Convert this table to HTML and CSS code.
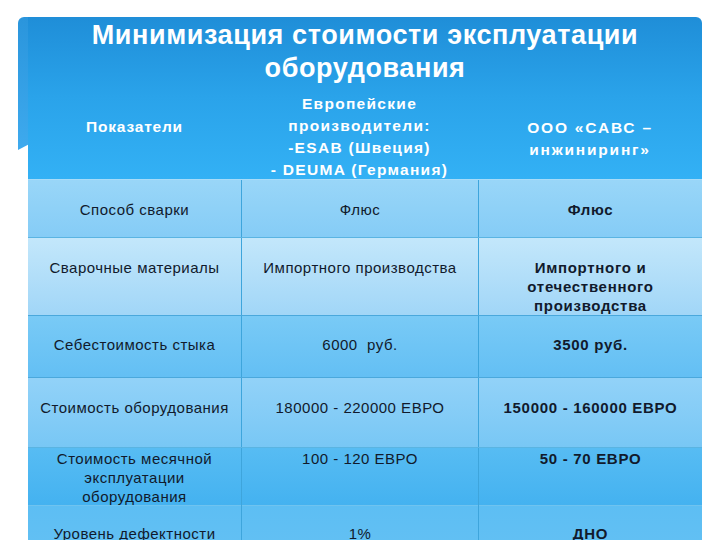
FILE: index.html
```html
<!DOCTYPE html>
<html lang="ru">
<head>
<meta charset="utf-8">
<title>Минимизация стоимости эксплуатации оборудования</title>
<link rel="stylesheet" href="styles.css">
</head>
<body>
<div class="slide">
  <div class="panel">
    <div class="fold"></div>
    <div class="main">
      <h1 class="title">Минимизация стоимости эксплуатации<br>оборудования</h1>
      <div class="row head">
        <div class="cell c1">Показатели</div>
        <div class="cell c2">Европейские<br>производители:<br>-ESAB (Швеция)<br>- DEUMA (Германия)</div>
        <div class="cell c3">ООО «САВС –<br>инжиниринг»</div>
      </div>
      <div class="row r1">
        <div class="cell">Способ сварки</div>
        <div class="cell">Флюс</div>
        <div class="cell strong">Флюс</div>
      </div>
      <div class="row r2">
        <div class="cell">Сварочные материалы</div>
        <div class="cell">Импортного производства</div>
        <div class="cell strong">Импортного и<br>отечественного<br>производства</div>
      </div>
      <div class="row r3">
        <div class="cell">Себестоимость стыка</div>
        <div class="cell">6000&nbsp; руб.</div>
        <div class="cell strong">3500 руб.</div>
      </div>
      <div class="row r4">
        <div class="cell">Стоимость оборудования</div>
        <div class="cell">180000 - 220000 ЕВРО</div>
        <div class="cell strong">150000 - 160000 ЕВРО</div>
      </div>
      <div class="row r5">
        <div class="cell">Стоимость месячной<br>эксплуатации<br>оборудования</div>
        <div class="cell">100 - 120 ЕВРО</div>
        <div class="cell strong">50 - 70 ЕВРО</div>
      </div>
      <div class="row r6">
        <div class="cell">Уровень дефектности</div>
        <div class="cell">1%</div>
        <div class="cell strong">ДНО</div>
      </div>
    </div>
  </div>
</div>
</body>
</html>
```

FILE: styles.css
```css
html, body {
  margin: 0;
  padding: 0;
  background: #ffffff;
}
.slide {
  width: 720px;
  height: 540px;
  overflow: hidden;
  padding-top: 17px;
  box-sizing: border-box;
  font-family: "Liberation Sans", Arial, sans-serif;
}
.panel {
  display: flex;
  margin-left: 18px;
  width: 684px;
  height: 523px;
}
.fold {
  width: 10px;
  height: 133px;
  flex: none;
  border-radius: 6px 0 0 0;
  background: linear-gradient(#2a95dc, #3eaaee);
  clip-path: polygon(0 0, 100% 0, 100% 96%, 0 100%);
}
.main {
  flex: 1;
  border-radius: 0 6px 0 0;
  background: linear-gradient(#1f8ed8 0px, #2aa3ea 80px, #33b1f5 163px);
  overflow: hidden;
}
.title {
  margin: 0;
  height: 73px;
  padding-top: 2px;
  box-sizing: border-box;
  text-align: center;
  color: #ffffff;
  font-size: 27px;
  font-weight: bold;
  line-height: 33px;
  letter-spacing: 0.6px;
}
.row {
  display: grid;
  grid-template-columns: 213px 237px 1fr;
  box-sizing: border-box;
}
.cell {
  text-align: center;
  font-size: 15px;
  letter-spacing: 0.5px;
  line-height: 19px;
  color: #111a2c;
  box-sizing: border-box;
}
.row .cell + .cell {
  border-left: 1px solid #3ea5dc;
}
.strong {
  font-weight: bold;
  letter-spacing: 0.7px;
}
.head {
  height: 90px;
  border-bottom: 1px solid #a9dcf8;
}
.head .cell {
  color: #ffffff;
  font-size: 15.5px;
  font-weight: bold;
  line-height: 22px;
  border-left: none !important;
}
.head .c1 { padding-top: 26px; letter-spacing: 0.8px; }
.head .c2 { padding-top: 3px; letter-spacing: 1.3px; }
.head .c3 { padding-top: 27px; letter-spacing: 1.8px; }
.r1 {
  height: 57px;
  background: linear-gradient(#99d6f8, #85ccf6);
}
.r1 .cell { padding-top: 20px; }
.r2 {
  height: 78px;
  border-top: 1px solid #5ab4e2;
  background: linear-gradient(#c3e7fb, #a1d6f7);
}
.r2 .cell { padding-top: 20px; }
.r3 {
  height: 62px;
  border-top: 1px solid #4aa8dc;
  background: linear-gradient(#79caf6, #63bff4);
}
.r3 .cell { padding-top: 19px; }
.r4 {
  height: 70px;
  border-top: 1px solid #4aa8dc;
  background: linear-gradient(#92d2f8, #78c7f5);
}
.r4 .cell { padding-top: 20px; }
.r5 {
  height: 58px;
  border-top: 1px solid #5ab4e2;
  background: linear-gradient(#57bcf3, #44b2f0);
}
.r5 .cell { padding-top: 1px; }
.r6 {
  height: 40px;
  border-top: 1px solid #6fc3ef;
  background: linear-gradient(#5dbef3, #62c0f3);
}
.r6 .cell { padding-top: 18px; }
```
